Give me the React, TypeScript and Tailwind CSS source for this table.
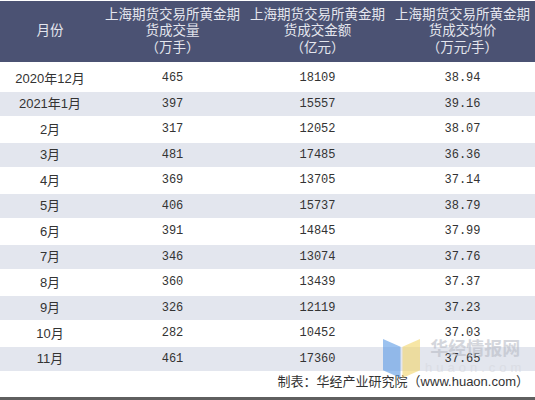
const rows = [
  ["2020年12月", "465", "18109", "38.94"],
  ["2021年1月", "397", "15557", "39.16"],
  ["2月", "317", "12052", "38.07"],
  ["3月", "481", "17485", "36.36"],
  ["4月", "369", "13705", "37.14"],
  ["5月", "406", "15737", "38.79"],
  ["6月", "391", "14845", "37.99"],
  ["7月", "346", "13074", "37.76"],
  ["8月", "360", "13439", "37.37"],
  ["9月", "326", "12119", "37.23"],
  ["10月", "282", "10452", "37.03"],
  ["11月", "461", "17360", "37.65"],
];

const cjk = "font-['Liberation_Sans','Noto_Sans_CJK_SC',sans-serif]";
const mono = "font-['Liberation_Mono','Noto_Sans_CJK_SC',monospace]";

export default function App() {
  return (
    <div className="relative w-[535px] h-[400px] bg-white overflow-hidden text-[#333]">
      {/* Header */}
      <div className={`mt-px h-[61px] bg-[#4b5273] text-[#e4e6ee] grid grid-cols-[100px_145px_145px_145px] text-[13.5px] leading-[16.5px] ${cjk}`}>
        <div className="flex items-center justify-center">月份</div>
        <div className="flex flex-col items-center justify-center text-center whitespace-nowrap">
          <span>上海期货交易所黄金期</span>
          <span>货成交量</span>
          <span>（万手）</span>
        </div>
        <div className="flex flex-col items-center justify-center text-center whitespace-nowrap">
          <span>上海期货交易所黄金期</span>
          <span>货成交金额</span>
          <span>（亿元）</span>
        </div>
        <div className="flex flex-col items-center justify-center text-center whitespace-nowrap">
          <span>上海期货交易所黄金期</span>
          <span>货成交均价</span>
          <span>（万元/手）</span>
        </div>
      </div>

      {/* Body */}
      <div className="mt-[3px] flex flex-col">
        {rows.map((r, i) => (
          <div
            key={r[0]}
            className={`h-[25.5px] border-t border-white grid grid-cols-[100px_145px_145px_145px] items-center ${i % 2 === 1 ? "bg-[#e3e6ee]" : "bg-white"}`}
          >
            <div className={`text-center text-[13px] ${cjk}`}>{r[0]}</div>
            <div className={`text-center text-[12px] ${mono}`}>{r[1]}</div>
            <div className={`text-center text-[12px] ${mono}`}>{r[2]}</div>
            <div className={`text-center text-[12px] ${mono}`}>{r[3]}</div>
          </div>
        ))}
      </div>

      {/* Footer */}
      <div className={`h-[22px] flex items-center justify-end pr-[6px] text-[13px] ${cjk}`}>
        制表：华经产业研究院（www.huaon.com）
      </div>
      <div className="absolute left-0 right-0 bottom-0 h-[3px] bg-[#5f5f5f]" />

      {/* Watermark */}
      <div className="absolute left-[383px] top-[337px] flex items-start gap-[5px] opacity-60 pointer-events-none">
        <svg width="37" height="41" viewBox="0 0 38 42">
          <polygon points="0,2 18,10 18,42 0,34" fill="#5b9be6" />
          <polygon points="20,10 38,2 38,34 20,42" fill="#f2d66b" />
        </svg>
        <div className="flex flex-col items-center">
          <span className={`text-[18px] leading-[24px] font-bold text-[#b8bcc6] ${cjk}`}>华经情报网</span>
          <span className="text-[13px] leading-[14px] text-[#d6d8de] tracking-[4px] font-['Liberation_Sans',sans-serif]">huaon.com</span>
        </div>
      </div>
    </div>
  );
}
